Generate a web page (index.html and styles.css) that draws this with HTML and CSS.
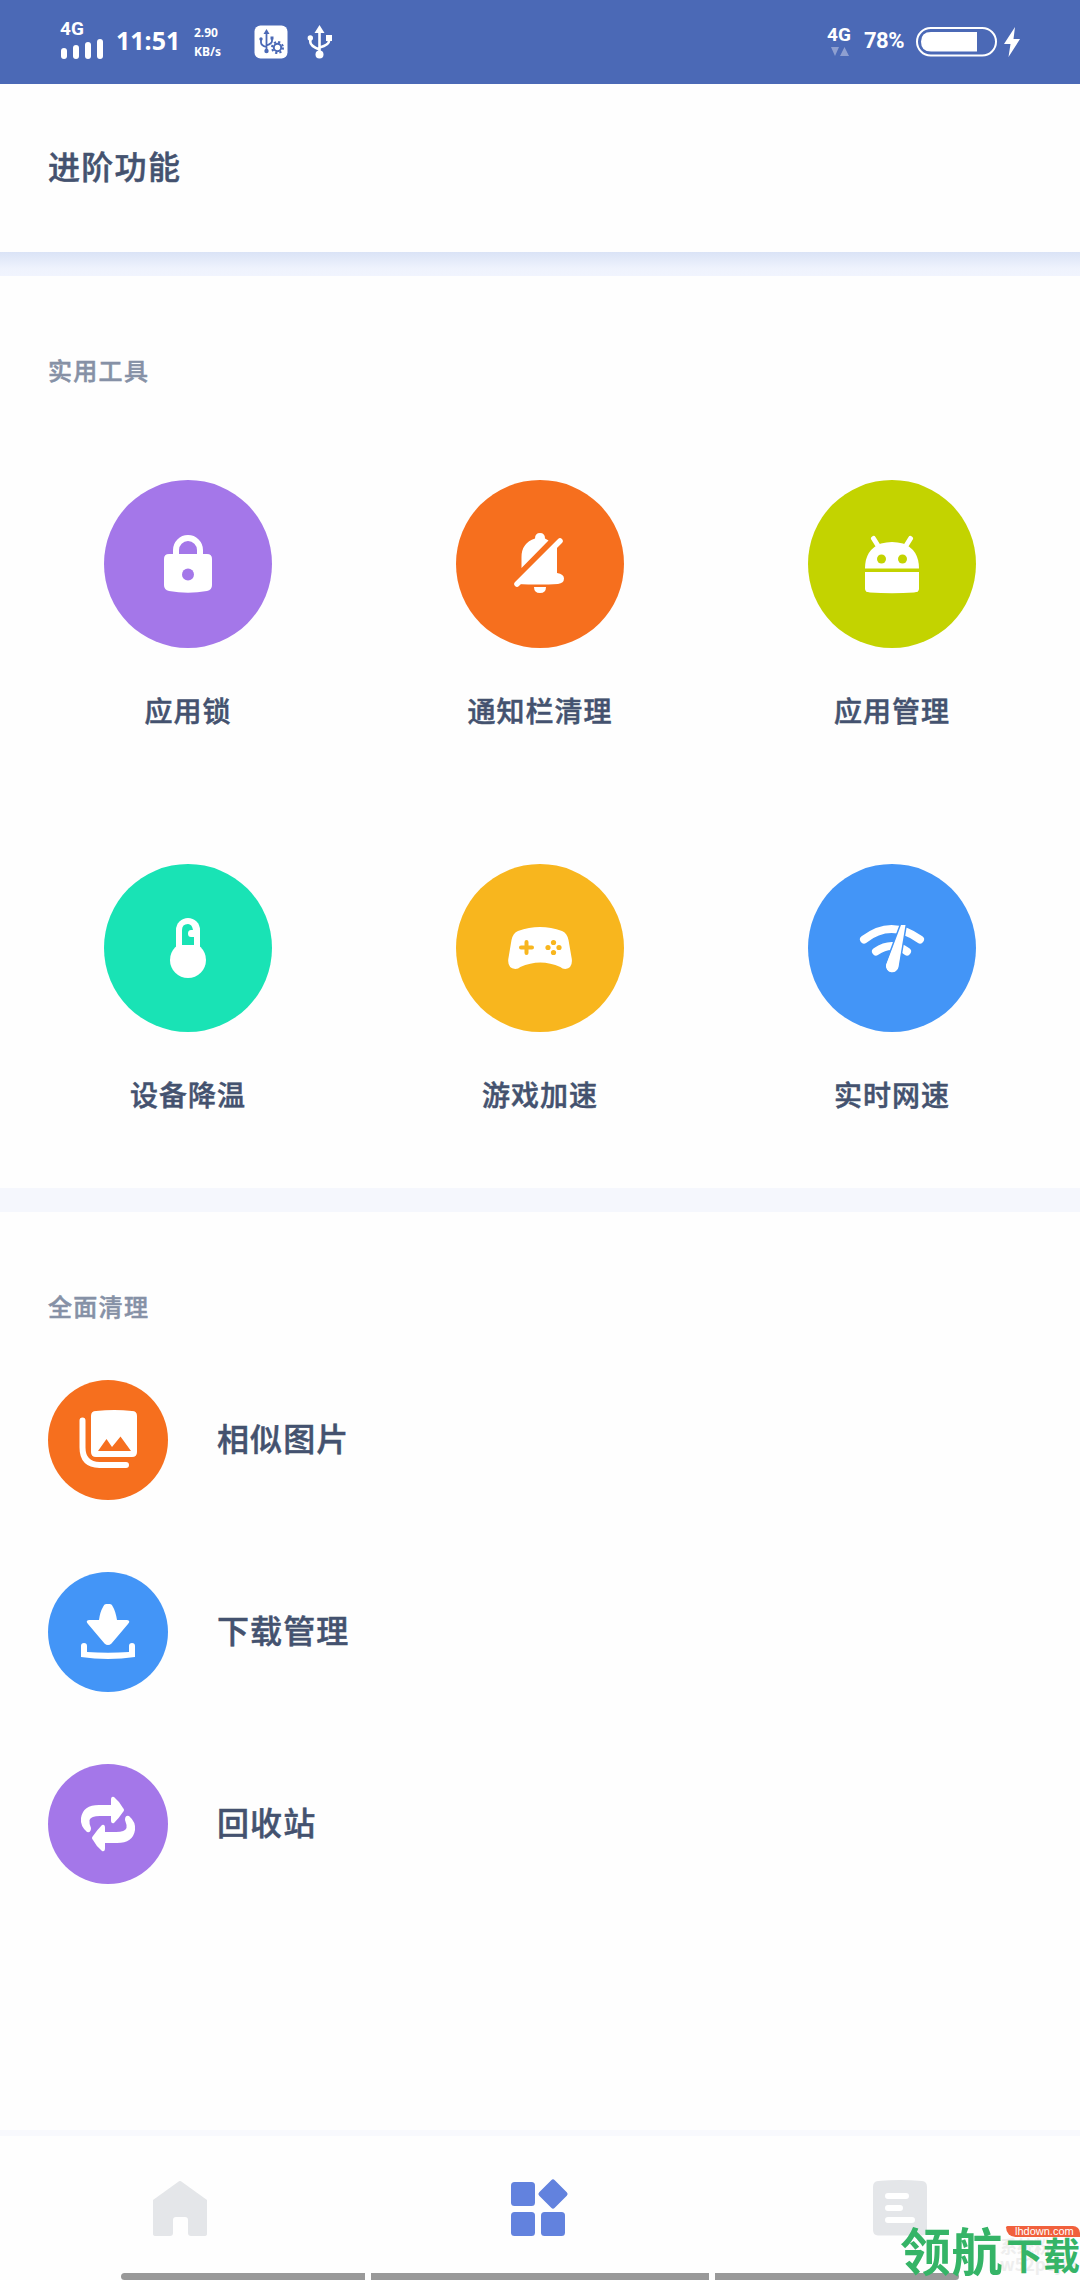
FILE: index.html
```html
<!DOCTYPE html>
<html lang="zh-CN">
<head>
<meta charset="utf-8">
<title>进阶功能</title>
<link rel="stylesheet" href="styles.css">
</head>
<body>
<div class="screen">
  <header class="status">
    <div class="cell-signal">
      <span class="net">4G</span>
      <span class="bars"><i class="bar b1"></i><i class="bar b2"></i><i class="bar b3"></i><i class="bar b4"></i></span>
    </div>
    <span class="clock">11:51</span>
    <div class="speed"><span>2.90</span><span>KB/s</span></div>
    <svg class="usb-box" width="34" height="34" viewBox="0 0 34 34">
      <rect x=".5" y=".5" width="33" height="33" rx="6" fill="#fff"/>
      <g fill="none" stroke="#4b69b6" stroke-width="1.8"><path d="M12.500 7v19M7 14v3.500q0 3 5.500 4.500M18 13v3q0 2.500-5.500 4.500"/></g>
      <g fill="#4b69b6"><path d="M12.500 4l3 5h-6z"/><circle cx="12.500" cy="26" r="2.200"/><circle cx="7" cy="14" r="1.700"/><rect x="16.500" y="11.500" width="3" height="3"/></g>
      <circle cx="23.500" cy="22.500" r="5.500" fill="none" stroke="#4b69b6" stroke-width="2" stroke-dasharray="2.160 2.160"/>
      <circle cx="23.500" cy="22.500" r="3.700" fill="#fff" stroke="#4b69b6" stroke-width="2"/>
    </svg>
    <svg class="usb" width="26" height="34" viewBox="0 0 26 34">
      <g fill="none" stroke="#fff" stroke-width="2.600"><path d="M12.500 5v24M3.300 13v4q0 4 9.200 7.500M22 12v4q0 4-9.500 6.500"/></g>
      <g fill="#fff"><path d="M12.500 0l5 8h-10z"/><circle cx="12.500" cy="29.500" r="4"/><circle cx="3.300" cy="13" r="2.700"/><rect x="19" y="10" width="6" height="6"/></g>
    </svg>
    <div class="data"><span class="net">4G</span>
      <svg width="18" height="9" viewBox="0 0 18 9" fill="#8e9fd0"><path d="M0 0h8L4 9zM9 9h9L13.500 0z"/></svg>
    </div>
    <span class="percent">78%</span>
    <svg class="battery" width="82" height="30" viewBox="0 0 82 30">
      <rect x="1" y="1" width="79" height="27.500" rx="13.750" fill="none" stroke="#fff" stroke-width="2"/>
      <path d="M61 5v19.500H15Q5 24.500 5 14.750T15 5z" fill="#fff"/>
    </svg>
    <svg class="bolt" width="16" height="30" viewBox="0 0 16 30" fill="#fff"><path d="M11 0L0 17h6.500L4.500 30 16 12H9.500z"/></svg>
  </header>

  <div class="title-bar"><h1>进阶功能</h1></div>
  <div class="divider shaded"></div>

  <section class="tools">
    <h2>实用工具</h2>
    <div class="grid">
      <div class="tool">
        <svg class="disc" viewBox="0 0 168 168">
          <circle cx="84" cy="84" r="84" fill="#a477e9"/>
          <path d="M72 76v-6a12 12 0 0 1 24 0v6" fill="none" stroke="#fff" stroke-width="6"/>
          <path d="M65 74h38q5 0 5 5v26q0 5-5 6-19 3.500-38 0-5-1-5-6V79q0-5 5-5z" fill="#fff"/>
          <circle cx="84" cy="94.500" r="6" fill="#a477e9"/>
        </svg>
        <span>应用锁</span>
      </div>
      <div class="tool">
        <svg class="disc" viewBox="0 0 168 168">
          <circle cx="84" cy="84" r="84" fill="#f66f1e"/>
          <path d="M65.500 88V77q0-14 13.500-18.500 0-5.500 5-5.500t5 5.500l3.500 2z" fill="#fff"/>
          <path d="M61 104L104 61" stroke="#fff" stroke-width="5.500" stroke-linecap="round"/>
          <path d="M65 102L101 66V93q7 1 7 5.500 0 4.500-6 5.500-18 1-41 0z" fill="#fff"/>
          <path d="M78 107h12q0 6-6 6t-6-6z" fill="#fff"/>
        </svg>
        <span>通知栏清理</span>
      </div>
      <div class="tool">
        <svg class="disc" viewBox="0 0 168 168">
          <circle cx="84" cy="84" r="84" fill="#c3d300"/>
          <path d="M57 88.500q0-19 16-25 11-3 22 0 16 6 16 25z" fill="#fff"/>
          <path d="M65.500 58.500l5 8M102.500 58.500l-5 8" stroke="#fff" stroke-width="5" stroke-linecap="round"/>
          <circle cx="73.500" cy="79" r="4.500" fill="#c3d300"/><circle cx="94.500" cy="79" r="4.500" fill="#c3d300"/>
          <path d="M57 92h54v17q0 3-5 3.500-22 1.500-44 0-5-.5-5-3.500z" fill="#fff"/>
        </svg>
        <span>应用管理</span>
      </div>
      <div class="tool">
        <svg class="disc" viewBox="0 0 168 168">
          <circle cx="84" cy="84" r="84" fill="#19e3b5"/>
          <circle cx="84" cy="96" r="18" fill="#fff"/>
          <path d="M72 84V66a12 12 0 0 1 24 0v18z" fill="#fff"/>
          <path d="M78 81V66q0-6 6-6 4 0 5 6h-2q-3 0-3 3.500t3 3.500h3v8z" fill="#19e3b5"/>
        </svg>
        <span>设备降温</span>
      </div>
      <div class="tool">
        <svg class="disc" viewBox="0 0 168 168">
          <circle cx="84" cy="84" r="84" fill="#f8b61e"/>
          <path d="M62 67q22-8 44 0 5 2 6.500 9l3.300 19q1 9-6.500 10-3 0-5-2-20-9-40 0-2 2-5 2-8-1-7-10l3.200-19q1.500-7 6.500-9z" fill="#fff"/>
          <path d="M70.500 78v11M65 83.500h11" stroke="#f8b61e" stroke-width="4" stroke-linecap="round"/>
          <g fill="#f8b61e"><circle cx="97.500" cy="78.500" r="2.600"/><circle cx="97.500" cy="88.500" r="2.600"/><circle cx="92" cy="83.500" r="2.600"/><circle cx="103" cy="83.500" r="2.600"/></g>
        </svg>
        <span>游戏加速</span>
      </div>
      <div class="tool">
        <svg class="disc" viewBox="0 0 168 168">
          <circle cx="84" cy="84" r="84" fill="#4395f7"/>
          <path d="M56 75.500q27-21 56 0" fill="none" stroke="#fff" stroke-width="8" stroke-linecap="round"/>
          <path d="M68 87.500q16-11 31 0" fill="none" stroke="#fff" stroke-width="8" stroke-linecap="round"/>
          <path d="M93 61h4.500L90.500 103a6 6 0 0 1-12.500-2z" fill="#fff" stroke="#4395f7" stroke-width="3" paint-order="stroke"/>
          <path d="M93.500 62h3L90 103a5.800 5.800 0 0 1-11.800-2z" fill="#fff"/>
        </svg>
        <span>实时网速</span>
      </div>
    </div>
  </section>

  <div class="divider"></div>

  <section class="cleanup">
    <h2>全面清理</h2>
    <div class="row">
      <svg class="dot" viewBox="0 0 120 120">
        <circle cx="60" cy="60" r="60" fill="#f66f1e"/>
        <path d="M34.500 40.500v27q0 17 17 17.500h26.500" fill="none" stroke="#fff" stroke-width="6" stroke-linecap="round" stroke-linejoin="round"/>
        <path d="M48 31q18.500-2 36 0 5 0 5 5v36q0 5-5 5H48q-5 0-5-5V36q0-5 5-5z" fill="#fff"/>
        <path d="M50 71l8.500-12 5.500 8 8.500-10.500L83 71z" fill="#f66f1e"/>
      </svg>
      <span>相似图片</span>
    </div>
    <div class="row">
      <svg class="dot" viewBox="0 0 120 120">
        <circle cx="60" cy="60" r="60" fill="#4395f7"/>
        <path d="M55 35q1-3 3-3h4q2 0 3 3 2.500 4 4 13h10q4 .5 1 4L63.500 71.500q-3.500 3-7 0L40 52q-3-3.500 1-4h10q1-8 4-13z" fill="#fff"/>
        <path d="M33 74q0-3 3-3t3 3v6q21 1.500 42 0v-6q0-3 3-3t3 3v11q-27 4-54 0z" fill="#fff"/>
      </svg>
      <span>下载管理</span>
    </div>
    <div class="row">
      <svg class="dot" viewBox="0 0 120 120">
        <circle cx="60" cy="60" r="60" fill="#a477e9"/>
        <g id="swap" fill="#fff"><path d="M63 41v-5q0-4 3-3 6 5 9 11 2 2 0 4-4 6-9 11-3 1-3-3v-4H52q-9 0-10.500 4-.5 3 1.500 8 0 5-4 4-7-6-6-14 2-13 18-13z"/></g>
        <use href="#swap" transform="rotate(180 60 60)"/>
      </svg>
      <span>回收站</span>
    </div>
  </section>

  <nav class="tabs">
    <svg class="tab" viewBox="0 0 60 60" fill="#e4e6e9"><path d="M28 4q2-2 4 0l25 18v34q0 2-3 2H41q-3 0-3-3V42q0-3-3-3H26q-3 0-3 3v13q0 3-3 3H6q-3 0-3-2V22z"/></svg>
    <svg class="tab" viewBox="0 0 60 60" fill="#6282de"><rect x="1" y="4" width="24" height="24" rx="3.500"/><rect x="1" y="34" width="24" height="24" rx="3.500"/><rect x="31" y="34" width="24" height="24" rx="3.500"/><rect x="32" y="5" width="22" height="22" rx="2.500" transform="rotate(45 43 16)"/></svg>
    <svg class="tab" viewBox="0 0 60 60"><path d="M8 3q22-2 44 0 5 .5 5 6v43q0 5-5 5.500H8q-5-.5-5-5.500V9q0-5.500 5-6z" fill="#e4e6e9"/><path d="M18 18h18M18 30h12M18 42h24" stroke="#fff" stroke-width="6" stroke-linecap="round"/></svg>
  </nav>

  <div class="gesture"><i></i><i></i><i></i></div>
  <div class="watermark">
    <span class="ghost">系统粉<br>w52pojie</span>
    <span class="big">领航</span>
    <span class="side"><span class="site">lhdown.com</span><span class="small">下载</span></span>
  </div>
</div>
</body>
</html>
```
FILE: styles.css
```css
* { box-sizing: border-box; }
body { margin: 0; background: #fff; }
svg { display: block; flex: none; }
h1, h2 { margin: 0; font-weight: 500; }

.screen {
  position: relative;
  display: flex;
  flex-direction: column;
  width: 1080px;
  height: 2280px;
  overflow: hidden;
  background: #fefefe;
  color: #44526f;
  font-family: "Noto Sans CJK SC", sans-serif;
  font-weight: 500;
}

/* Status bar */
.status {
  display: flex;
  align-items: center;
  height: 84px;
  padding: 0 60px;
  background: #4b69b6;
  color: #fff;
  font-family: "Noto Sans", sans-serif;
  font-weight: 700;
  line-height: 1;
}
.cell-signal { width: 44px; padding-bottom: 7px; }
.net { display: block; font: 700 19px/20px Roboto, sans-serif; }
.bars { display: flex; align-items: flex-end; gap: 6px; height: 20px; padding-left: 1px; }
.bar { width: 6px; border-radius: 3px; background: #fff; }
.b1 { height: 11px; }
.b2 { height: 14px; }
.b3 { height: 17px; }
.b4 { height: 20px; }
.clock { width: 66px; margin-left: 12px; padding-bottom: 3px; font-size: 25px; font-weight: 700; letter-spacing: 0; }
.speed { display: flex; flex-direction: column; width: 48px; margin-left: 12px; font-size: 12px; line-height: 19px; font-weight: 700; }
.usb-box { margin-left: 12px; }
.usb { margin-left: 19px; }
.data { margin-left: auto; width: 26px; padding-bottom: 4px; }
.data svg { margin: 2px 0 0 4px; }
.percent { width: 42px; margin-left: 11px; padding-bottom: 2px; font: 700 22px/1 Roboto, sans-serif; letter-spacing: -.5px; }
.battery { margin-left: 10px; }
.bolt { margin-left: 6px; }

/* Header */
.title-bar { display: flex; align-items: center; height: 168px; padding: 0 48px 6px; }
h1 { font-size: 32px; letter-spacing: 1.300px; line-height: 40px; }
h1, h2, .tool span, .row span { -webkit-text-stroke: .5px currentColor; }
.divider { height: 24px; background: #f5f7fd; }
.shaded { background: linear-gradient(#dae3f6, #eff3fd 70%, #f1f4fe); }

/* Sections */
h2 { padding-left: 48px; color: #8691a6; font-size: 24px; line-height: 36px; letter-spacing: 1.300px; }
.tools { height: 912px; padding-top: 76px; }
.grid { display: grid; grid-template-columns: repeat(3, 1fr); grid-auto-rows: 384px; padding: 92px 12px 0; }
.tool { display: flex; flex-direction: column; align-items: center; gap: 42px; font-size: 28px; line-height: 40px; letter-spacing: 1px; }
.disc { width: 168px; height: 168px; }

.cleanup { display: flex; flex-direction: column; flex: 1; padding-top: 76px; }
.row { display: flex; align-items: center; gap: 49px; height: 120px; margin: 56px 0 16px 48px; font-size: 32px; letter-spacing: 1.100px; }
.row span { padding-bottom: 7px; }
.dot { width: 120px; height: 120px; }

/* Bottom navigation */
.tabs { display: grid; grid-template-columns: repeat(3, 1fr); justify-items: center; height: 150px; padding-top: 42px; border-top: 6px solid #f8f9fd; }
.tab { width: 60px; height: 60px; }

/* System gesture bar and site stamp lie over the page */
.gesture { position: absolute; left: 121px; bottom: 0; display: flex; gap: 6px; width: 838px; height: 7px; border-radius: 4px; overflow: hidden; }
.gesture i { background: #999; flex: 0 0 244px; }
.gesture i:nth-child(2) { flex-basis: 338px; }
.gesture i:nth-child(3) { flex: 1; }
.watermark { position: absolute; left: 900px; top: 2226px; display: flex; width: 180px; height: 54px; color: #35b467; font-weight: 700; white-space: nowrap; }
.big { flex: none; width: 104px; font-size: 51px; line-height: 46px; letter-spacing: .5px; }
.side { display: flex; flex-direction: column; flex: none; margin-left: 2px; }
.site { width: 74px; height: 11px; padding-left: 9px; border-radius: 2px 9px 0 12px; background: #f1603c; color: #fff; font: 11px/11px "Liberation Sans", sans-serif; }
.small { font-size: 37px; line-height: 35px; }
.ghost { position: absolute; left: 100px; top: 11px; color: #eee; font-size: 17px; line-height: 18px; }
.big, .side { position: relative; }
```
